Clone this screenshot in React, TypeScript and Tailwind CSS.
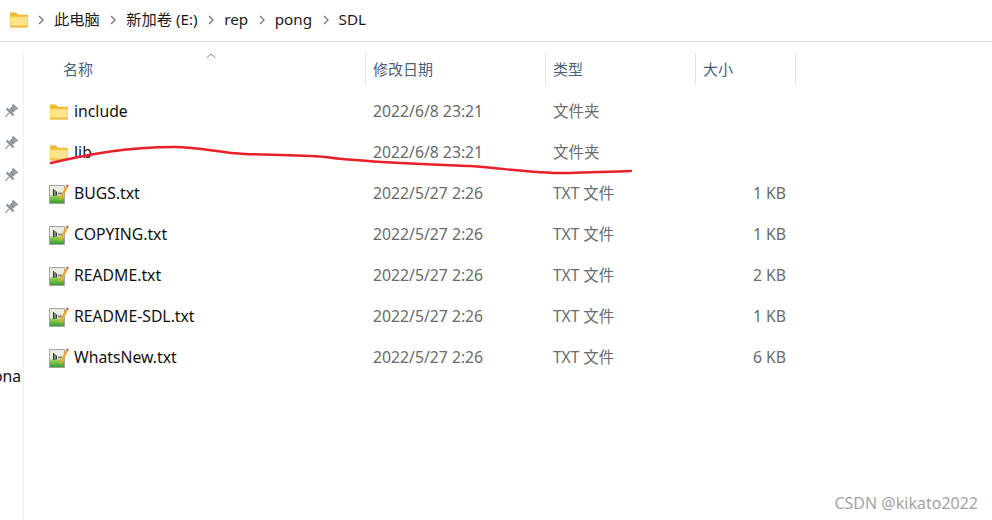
const FONT = "font-['Noto_Sans','Noto_Sans_CJK_SC',sans-serif]"

const files = [
  { name: 'include', date: '2022/6/8 23:21', type: '文件夹', size: '', folder: true },
  { name: 'lib', date: '2022/6/8 23:21', type: '文件夹', size: '', folder: true },
  { name: 'BUGS.txt', date: '2022/5/27 2:26', type: 'TXT 文件', size: '1 KB', folder: false },
  { name: 'COPYING.txt', date: '2022/5/27 2:26', type: 'TXT 文件', size: '1 KB', folder: false },
  { name: 'README.txt', date: '2022/5/27 2:26', type: 'TXT 文件', size: '2 KB', folder: false },
  { name: 'README-SDL.txt', date: '2022/5/27 2:26', type: 'TXT 文件', size: '1 KB', folder: false },
  { name: 'WhatsNew.txt', date: '2022/5/27 2:26', type: 'TXT 文件', size: '6 KB', folder: false },
]

const crumbs = ['此电脑', '新加卷 (E:)', 'rep', 'pong', 'SDL']

function FolderIcon() {
  return (
    <svg width="18" height="16" viewBox="0 0 18 16" className="shrink-0">
      <path d="M0 1.5C0 1 .4.5 1 .5h5l2 2.2h9c.6 0 1 .4 1 1V5H0z" fill="#f2b632" />
      <path d="M0 4.5h18v10c0 .6-.4 1-1 1H1c-.6 0-1-.4-1-1z" fill="#fbd766" />
      <path d="M1 5.5h16v9H1z" fill="#fde48f" />
      <path d="M0 13.5h18v1c0 .6-.4 1-1 1H1c-.6 0-1-.4-1-1z" fill="#eebc47" />
    </svg>
  )
}

function TxtIcon() {
  return (
    <svg width="20" height="21" viewBox="0 0 20 21" className="shrink-0">
      <defs>
        <linearGradient id="paper" x1="0" y1="0" x2="0" y2="1">
          <stop offset="0" stopColor="#ededea" />
          <stop offset="0.5" stopColor="#e6ecd6" />
          <stop offset="0.62" stopColor="#8fce4e" />
          <stop offset="1" stopColor="#2f9a2c" />
        </linearGradient>
      </defs>
      <path d="M.5 2.5h15v18H.5z" fill="url(#paper)" stroke="#a3a3a3" />
      <path d="M4.5 6v7M6 7v6M7.5 8.5v4M10 9.5v2M12 9.5v2" stroke="#3a3a3a" strokeWidth="1.1" />
      <path d="M10.5 15 17 3l2.2 1.1-6.5 12-2.4 1.2z" fill="#f0a92e" />
      <path d="M17 3l.7-1.6 2 1.1-.5 1.6z" fill="#c9412c" />
    </svg>
  )
}

function Chevron() {
  return (
    <svg width="6" height="10" viewBox="0 0 6 10" className="shrink-0">
      <path d="M1 1l4 4-4 4" fill="none" stroke="#7a7a7a" strokeWidth="1.3" />
    </svg>
  )
}

function Pin() {
  return (
    <svg width="15" height="15" viewBox="0 0 15 15">
      <g transform="rotate(45 7.5 7.5)" fill="#8c949c">
        <rect x="4" y="0" width="7" height="2" />
        <rect x="5" y="2" width="5" height="5" />
        <rect x="2.5" y="7" width="10" height="2.2" />
        <rect x="7" y="9" width="1.2" height="6" />
      </g>
    </svg>
  )
}

export default function App() {
  return (
    <div className={`relative h-[520px] w-[992px] overflow-hidden bg-white ${FONT}`}>
      <div className="flex h-[42px] items-center border-b border-[#dcdcdc] pl-[10px] pb-[2px] text-[15.25px] text-[#1a1a1a]">
        <FolderIcon />
        <div className="ml-[10px] flex items-center gap-[10.5px]">
          {crumbs.map(c => (
            <div key={c} className="flex items-center gap-[10px]">
              <Chevron />
              <span className="leading-none">{c}</span>
            </div>
          ))}
        </div>
      </div>

      <div className="flex">
        <div className="relative mt-[10px] h-[468px] w-[24px] shrink-0 border-r border-[#f0f0f0]">
          <div className="ml-[3px] flex flex-col gap-[17px] pt-[52px]">
            <Pin />
            <Pin />
            <Pin />
            <Pin />
          </div>
          <div className="absolute top-[314px] right-[2px] text-[15.75px] leading-[20px] text-[#111]">ona</div>
        </div>

        <div>
          <div className="mt-[11px] flex h-[32px] text-[15px] text-[#4c607a]">
            <div className="relative w-[341px] pl-[39px] leading-[32px]">
              名称
              <svg width="10" height="6" viewBox="0 0 10 6" className="absolute top-0 left-[182px]">
                <path d="M.5 5 5 1l4.5 4" fill="none" stroke="#8a8a8a" />
              </svg>
            </div>
            <div className="w-[180px] border-l border-[#e5e5e5] pl-[7px] leading-[32px]">修改日期</div>
            <div className="w-[150px] border-l border-[#e5e5e5] pl-[7px] leading-[32px]">类型</div>
            <div className="w-[101px] border-x border-[#e5e5e5] pl-[7px] leading-[32px]">大小</div>
          </div>

          <div className="mt-[6px] flex flex-col">
            {files.map(f => (
              <div key={f.name} className="flex h-[41px] items-center text-[15.75px]">
                <div className="flex w-[342px] items-center gap-[5px] pl-[25px] text-[#111]">
                  <div className="flex w-[20px] justify-center">
                    {f.folder ? <FolderIcon /> : <TxtIcon />}
                  </div>
                  <span>{f.name}</span>
                </div>
                <div className="w-[180px] pl-[7px] text-[#6b6b6b]">{f.date}</div>
                <div className="w-[150px] pl-[7px] text-[15.5px] text-[#6b6b6b]">{f.type}</div>
                <div className="w-[100px] pr-[10px] text-right text-[#6b6b6b]">{f.size}</div>
              </div>
            ))}
          </div>
        </div>
      </div>

      <svg width="992" height="520" className="pointer-events-none absolute inset-0">
        <path
          d="M51 163C85 155 125 147 175 147C200 147 220 153 245 154C270 155 300 155 325 157C360 162 420 164 470 166C510 169 540 174 570 173C590 172 610 172 631 171"
          fill="none"
          stroke="#e8202a"
          strokeWidth="2.5"
          strokeLinecap="round"
        />
      </svg>

      <div className="absolute right-[14px] bottom-[8px] text-[16px] leading-[18px] text-[#a3a3a3]">CSDN @kikato2022</div>
    </div>
  )
}
